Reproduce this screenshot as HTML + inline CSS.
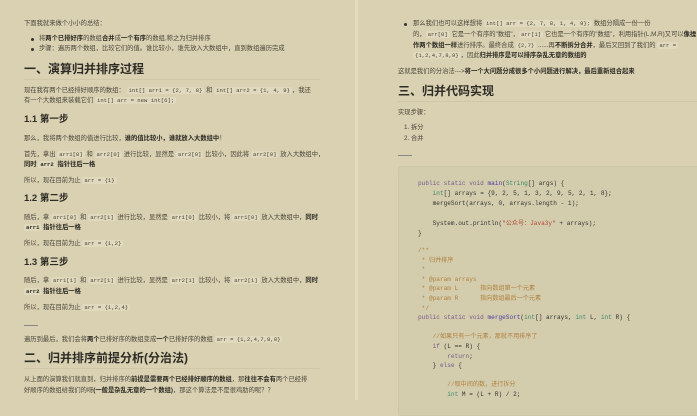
<!DOCTYPE html>
<html><head><meta charset="utf-8"><style>
*{margin:0;padding:0;box-sizing:border-box}
body{width:697px;height:400px;overflow:hidden;background:#d9d1b1;font-family:"Liberation Sans","Noto Sans CJK SC",sans-serif;color:#4a463c;position:relative}
.l{position:absolute;white-space:nowrap;font-size:6.3px;line-height:10px}
.h1{position:absolute;white-space:nowrap;font-size:12px;font-weight:bold;color:#2e2c26;line-height:20px}
.h2{position:absolute;white-space:nowrap;font-size:9.5px;font-weight:bold;color:#2e2c26;line-height:16px}
.hr{position:absolute;height:1px;background:#cfc7a6}
code{font-family:"Liberation Mono","Noto Sans CJK SC",monospace;font-size:5.6px;background:#e0d9bd;padding:0 2px;border-radius:2px}
b{color:#2a2822}
.d{position:absolute;width:3px;height:3px;border-radius:50%;background:#333}
.c{position:absolute;white-space:pre;font-family:"Liberation Mono","Noto Sans CJK SC",monospace;font-size:6.1px;line-height:10px;color:#333}
.k{color:#7a5a8a}.t{color:#3d8a6a}.f{color:#4a3aa0}.s{color:#b04a3a}.m{color:#b08040}
</style></head><body>
<div style="position:absolute;left:355px;top:0;width:3px;height:400px;background:#e2dbbf"></div>

<div class="l" style="left:24px;top:19px">下面我就来做个小小的总结：</div>
<div class="d" style="left:31px;top:38px"></div><div class="l" style="left:39px;top:34px">将<b>两个已排好序</b>的数组<b>合并</b>成<b>一个有序</b>的数组,称之为归并排序</div>
<div class="d" style="left:31px;top:48px"></div><div class="l" style="left:39px;top:44px">步骤：遍历两个数组，比较它们的值。谁比较小，谁先放入大数组中，直到数组遍历完成</div>
<div class="h1" style="left:24px;top:59px">一、演算归并排序过程</div>
<div class="hr" style="left:24px;top:79px;width:296px"></div>
<div class="l" style="left:24px;top:86px">现在我有两个已经排好顺序的数组： <code>int[] arr1 = {2, 7, 8}</code> 和 <code>int[] arr2 = {1, 4, 9}</code>，我还</div>
<div class="l" style="left:24px;top:96px">有一个大数组来装载它们 <code>int[] arr = new int[6];</code></div>
<div class="h2" style="left:24px;top:112px">1.1 第一步</div>
<div class="l" style="left:24px;top:134px">那么，我将两个数组的值进行比较，<b>谁的值比较小，谁就放入大数组中</b>！</div>
<div class="l" style="left:24px;top:150px">首先，拿出 <code>arr1[0]</code> 和 <code>arr2[0]</code> 进行比较，显然是 <code>arr2[0]</code> 比较小，因此将 <code>arr2[0]</code> 放入大数组中，</div>
<div class="l" style="left:24px;top:160px"><b>同时 <code>arr2</code> 指针往后一格</b></div>
<div class="l" style="left:24px;top:176px">所以，现在目前为止 <code>arr = {1}</code></div>
<div class="h2" style="left:24px;top:191px">1.2 第二步</div>
<div class="l" style="left:24px;top:213px">随后，拿 <code>arr1[0]</code> 和 <code>arr2[1]</code> 进行比较，显然是 <code>arr1[0]</code> 比较小，将 <code>arr1[0]</code> 放入大数组中，<b>同时</b></div>
<div class="l" style="left:24px;top:223px"><b><code>arr1</code> 指针往后一格</b></div>
<div class="l" style="left:24px;top:239px">所以，现在目前为止 <code>arr = {1,2}</code></div>
<div class="h2" style="left:24px;top:255px">1.3 第三步</div>
<div class="l" style="left:24px;top:276px">随后，拿 <code>arr1[1]</code> 和 <code>arr2[1]</code> 进行比较，显然是 <code>arr2[1]</code> 比较小，将 <code>arr2[1]</code> 放入大数组中，<b>同时</b></div>
<div class="l" style="left:24px;top:287px"><b><code>arr2</code> 指针往后一格</b></div>
<div class="l" style="left:24px;top:303px">所以，现在目前为止 <code>arr = {1,2,4}</code></div>
<div class="hr" style="left:24px;top:325px;width:14px;background:#888"></div>
<div class="l" style="left:24px;top:335px">遍历到最后，我们会将<b>两个</b>已排好序的数组变成<b>一个</b>已排好序的数组 <code>arr = {1,2,4,7,8,9}</code></div>
<div class="h1" style="left:24px;top:348px">二、归并排序前提分析(分治法)</div>
<div class="hr" style="left:24px;top:368px;width:296px"></div>
<div class="l" style="left:24px;top:375px">从上面的演算我们就直到，归并排序的<b>前提是需要两个已经排好顺序的数组</b>，那<b>往往不会有</b>两个已经排</div>
<div class="l" style="left:24px;top:386px">好顺序的数组给我们的呀<b>(一般是杂乱无章的一个数组)</b>，那这个算法是不是很鸡肋的呢？？</div>

<div class="d" style="left:404px;top:23px"></div><div class="l" style="left:413px;top:19px">那么我们也可以这样想将 <code>int[] arr = {2, 7, 8, 1, 4, 9};</code> 数组分隔成一份一份</div>
<div class="l" style="left:413px;top:30px">的，<code>arr[0]</code> 它是一个有序的"数组"，<code>arr[1]</code> 它也是一个有序的"数组"，利用指针(L,M,R)又可以<b>像操</b></div>
<div class="l" style="left:413px;top:41px"><b>作两个数组一样</b>进行排序。最终合成 <code>{2,7}</code> ......再<b>不断拆分合并</b>，最后又回到了我们的 <code>arr =</code></div>
<div class="l" style="left:413px;top:51px"><code>{1,2,4,7,8,9}</code>，因此<b>归并排序是可以排序杂乱无章的数组的</b></div>
<div class="l" style="left:398px;top:67px">这就是我们的分治法---&gt;<b>将一个大问题分成很多个小问题进行解决，最后重新组合起来</b></div>
<div class="h1" style="left:398px;top:81px">三、归并代码实现</div>
<div class="hr" style="left:398px;top:101px;width:299px"></div>
<div class="l" style="left:398px;top:108px">实现步骤：</div>
<div class="l" style="left:404px;top:123px">1. 拆分</div>
<div class="l" style="left:404px;top:134px">2. 合并</div>
<div class="hr" style="left:398px;top:155px;width:14px;background:#888"></div>

<div style="position:absolute;left:398px;top:166px;width:310px;height:250px;background:#d3cdad;border:1px solid #ccc5a6;border-radius:3px"></div>
<div class="c" style="left:418px;top:179px"><span class="k">public static void</span> <span class="f">main</span>(<span class="t">String</span>[] args) {
    <span class="t">int</span>[] arrays = {9, 2, 5, 1, 3, 2, 9, 5, 2, 1, 8};
    mergeSort(arrays, 0, arrays.length - 1);

    System.out.println(<span class="s">"公众号：Java3y"</span> + arrays);
}</div>
<div class="c" style="left:418px;top:246px;line-height:9.6px"><span class="m">/**
 * 归并排序
 *
 * @param arrays
 * @param L      指向数组第一个元素
 * @param R      指向数组最后一个元素
 */</span>
<span class="k">public static void</span> <span class="f">mergeSort</span>(<span class="t">int</span>[] arrays, <span class="t">int</span> L, <span class="t">int</span> R) {

    <span class="m">//如果只有一个元素，那就不用排序了</span>
    <span class="k">if</span> (L == R) {
        <span class="k">return</span>;
    } <span class="k">else</span> {

        <span class="m">//取中间的数，进行拆分</span>
        <span class="t">int</span> M = (L + R) / 2;</div>
</body></html>
